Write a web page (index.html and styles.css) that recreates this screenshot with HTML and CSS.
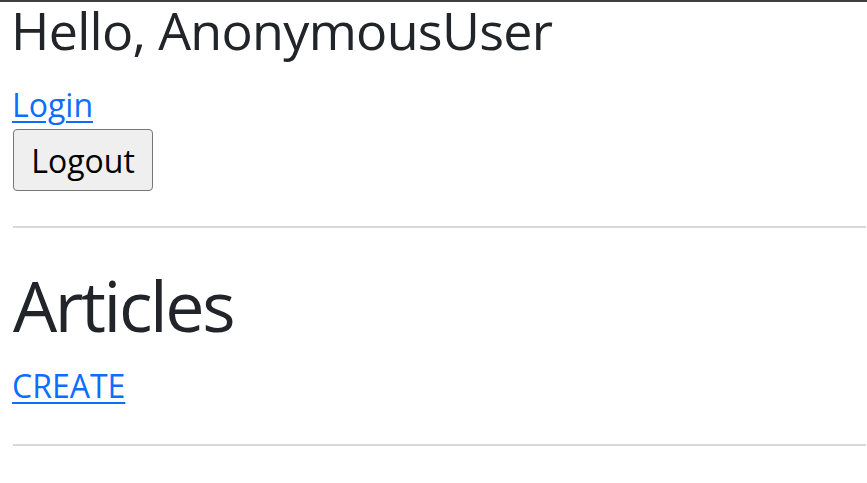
FILE: index.html
```html
<!DOCTYPE html>
<html lang="en">
<head>
<meta charset="utf-8">
<title>Articles</title>
<link rel="stylesheet" href="styles.css">
</head>
<body>
<div class="page">
  <h2 class="hello">Hello, AnonymousUser</h2>
  <div class="auth">
    <a class="link login" href="#">Login</a>
    <div class="btn-row"><button class="btn" type="button">Logout</button></div>
  </div>
  <hr class="rule rule-top">
  <h1 class="title">Articles</h1>
  <a class="link create" href="#">CREATE</a>
  <hr class="rule rule-bottom">
</div>
</body>
</html>
```

FILE: styles.css
```css
html, body {
  margin: 0;
  padding: 0;
  background: #ffffff;
}
body {
  border-top: 2px solid #3f3f3f;
  font-family: "Open Sans", "Noto Sans", sans-serif;
  color: #212529;
}
.page {
  display: flex;
  flex-direction: column;
  align-items: flex-start;
  padding: 0 1px 0 13px;
}
.hello {
  margin: 0 0 0 -2px;
  font-size: 52px;
  line-height: 56px;
  font-weight: 400;
  letter-spacing: -0.7px;
}
.auth {
  display: flex;
  flex-direction: column;
  align-items: flex-start;
  margin-top: 23px;
}
.link {
  font-size: 32px;
  line-height: 48px;
  color: #0d6efd;
  text-decoration: underline;
  text-underline-offset: 4px;
  text-decoration-thickness: 2px;
  margin-left: -1px;
}
.btn-row {
  display: flex;
}
.btn {
  font-family: "Open Sans", "Noto Sans", sans-serif;
  font-size: 32px;
  line-height: 48px;
  color: #000000;
  background: #efefef;
  border: 1px solid #767676;
  border-radius: 4px;
  padding: 7px 17px 5px 17px;
  width: 140px;
  height: 62px;
  box-sizing: border-box;
  margin: 0;
}
.rule {
  align-self: stretch;
  border: 0;
  height: 2px;
  background: #d9d9d9;
  margin: 0;
}
.rule-top {
  margin-top: 35px;
}
.title {
  margin: 35px 0 0 0;
  font-size: 70px;
  line-height: 84px;
  font-weight: 400;
  letter-spacing: -2.4px;
}
.create {
  margin-top: 15px;
}
.rule-bottom {
  margin-top: 34px;
}
```
